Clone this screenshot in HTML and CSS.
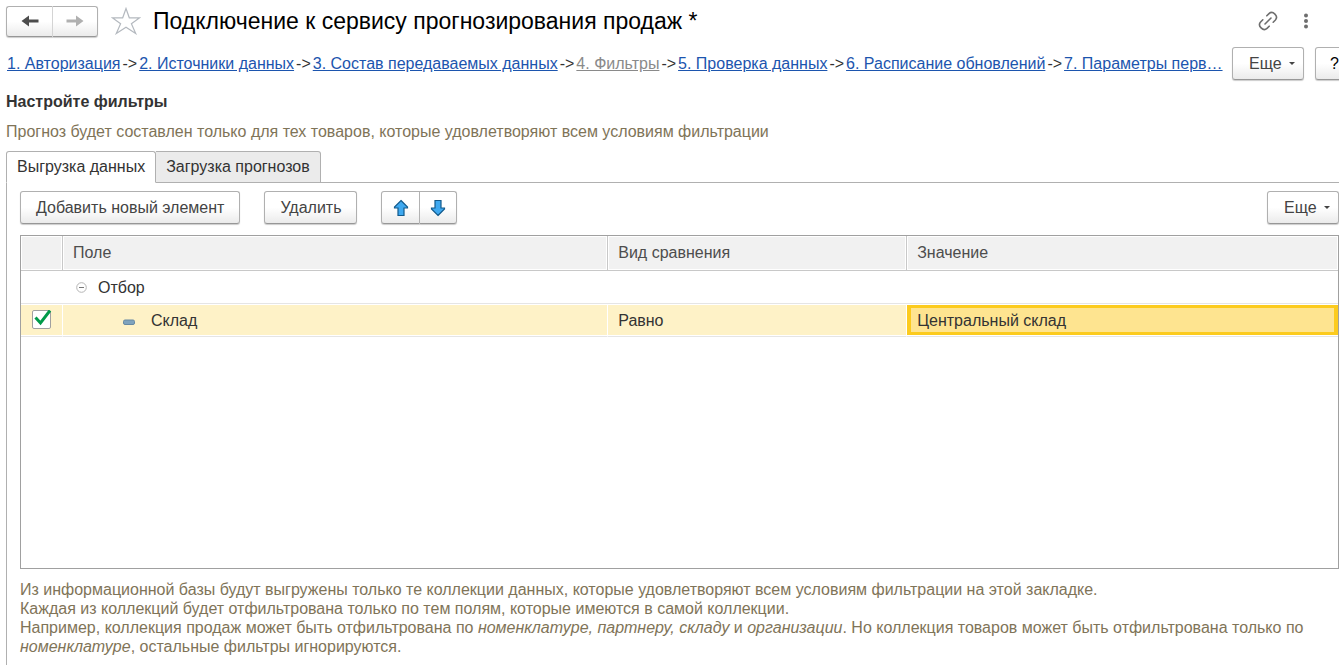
FILE: index.html
```html
<!DOCTYPE html>
<html lang="ru">
<head>
<meta charset="utf-8">
<meta name="viewport" content="width=device-width, initial-scale=1">
<title>Подключение к сервису прогнозирования продаж</title>
<link rel="stylesheet" href="styles.css">
</head>
<body>
<header class="titlebar">
  <div class="btn-group">
    <button class="btn nav-btn" type="button" aria-label="Назад">
      <svg width="18" height="12" viewBox="0 0 18 12"><path d="M17.500 4.500H8V0.500L0.500 6L8 11.500V7.500H17.500Z" fill="#4d4d4d"/></svg>
    </button>
    <button class="btn nav-btn" type="button" aria-label="Вперед">
      <svg width="18" height="12" viewBox="0 0 18 12"><path d="M0.500 4.500H10V0.500L17.500 6L10 11.500V7.500H0.500Z" fill="#b0b0b0"/></svg>
    </button>
  </div>
  <button class="icon-btn star" type="button" aria-label="В избранное">
    <svg width="30" height="28" viewBox="0 0 30 28"><path d="M15 1.500L18.300 10.800H28.700L20.400 16.700L24.700 26.500L15 20.300L5.300 26.500L9.600 16.700L1.300 10.800H11.700Z" fill="#fff" stroke="#b4b9bf" stroke-width="1.200"/></svg>
  </button>
  <h1 class="title">Подключение к сервису прогнозирования продаж *</h1>
  <button class="icon-btn" type="button" aria-label="Ссылка">
    <svg width="20" height="20" viewBox="0 0 20 20" fill="none" stroke="#6e6e6e" stroke-width="1.600" stroke-linecap="round"><path d="M7 13L13 7M8.800 4.800L11 2.600C14.800 -0.800 20.800 5.200 17.400 9L15.200 11.200M11.200 15.200L9 17.400C5.200 20.800 -0.800 14.800 2.600 11L4.800 8.800"/></svg>
  </button>
  <button class="icon-btn dots" type="button" aria-label="Меню">
    <svg width="6" height="16" viewBox="0 0 6 16" fill="#6e6e6e"><circle cx="3" cy="2.500" r="2"/><circle cx="3" cy="8" r="2"/><circle cx="3" cy="13.500" r="2"/></svg>
  </button>
</header>

<div class="steps-row">
  <nav class="steps">
    <a href="#s1">1. Авторизация</a><span>-&gt;</span>
    <a href="#s2">2. Источники данных</a><span>-&gt;</span>
    <a href="#s3">3. Состав передаваемых данных</a><span>-&gt;</span>
    <a class="current" href="#s4">4. Фильтры</a><span>-&gt;</span>
    <a href="#s5">5. Проверка данных</a><span>-&gt;</span>
    <a href="#s6">6. Расписание обновлений</a><span>-&gt;</span>
    <a href="#s7">7. Параметры перв…</a>
  </nav>
  <button class="btn more" type="button">Еще<span class="caret"></span></button>
  <button class="btn help" type="button">?</button>
</div>

<main class="content">
  <h2 class="heading">Настройте фильтры</h2>
  <p class="hint">Прогноз будет составлен только для тех товаров, которые удовлетворяют всем условиям фильтрации</p>

  <div class="tabs" role="tablist">
    <button class="tab active" type="button" role="tab" aria-selected="true">Выгрузка данных</button>
    <button class="tab" type="button" role="tab" aria-selected="false">Загрузка прогнозов</button>
    <div class="tab-rest"></div>
  </div>

  <section class="panel">
    <div class="toolbar">
      <button class="btn text-btn" type="button">Добавить новый элемент</button>
      <button class="btn text-btn" type="button">Удалить</button>
      <div class="btn-group">
        <button class="btn move-btn" type="button" aria-label="Вверх">
          <svg width="16" height="18" viewBox="0 0 16 18"><path d="M8 1.500L14.500 8V9H11V16.500H5V9H1.500V8Z" fill="#3fa9f0" stroke="#125a8c" stroke-width="1.200"/></svg>
        </button>
        <button class="btn move-btn" type="button" aria-label="Вниз">
          <svg width="16" height="18" viewBox="0 0 16 18"><path d="M8 16.500L14.500 10V9H11V1.500H5V9H1.500V10Z" fill="#3fa9f0" stroke="#125a8c" stroke-width="1.200"/></svg>
        </button>
      </div>
      <button class="btn more push" type="button">Еще<span class="caret"></span></button>
    </div>

    <div class="grid-box">
      <table class="grid">
        <colgroup><col class="c-check"><col class="c-field"><col class="c-kind"><col></colgroup>
        <thead>
          <tr><th></th><th>Поле</th><th>Вид сравнения</th><th>Значение</th></tr>
        </thead>
        <tbody>
          <tr>
            <td></td>
            <td><div class="node root"><svg width="11" height="11" viewBox="0 0 11 11" fill="none"><circle cx="5.500" cy="5.500" r="4.800" stroke="#b5b5b5"/><path d="M3 5.500H8" stroke="#777"/></svg>Отбор</div></td>
            <td></td>
            <td></td>
          </tr>
          <tr class="selected">
            <td class="check-cell"><label class="check"><input type="checkbox" aria-label="Использовать" checked><svg width="20" height="20" viewBox="0 0 20 20"><path d="M3.500 7.500L8.500 13L18 0.500" fill="none" stroke="#009a49" stroke-width="3"/></svg></label></td>
            <td><div class="node leaf"><svg width="12" height="10" viewBox="0 0 12 10"><rect x="0.500" y="5" width="11" height="4.500" rx="1.500" fill="#7fa3bd" stroke="#6689a3"/></svg>Склад</div></td>
            <td>Равно</td>
            <td class="focus">Центральный склад</td>
          </tr>
        </tbody>
      </table>
    </div>

    <p class="note">Из информационной базы будут выгружены только те коллекции данных, которые удовлетворяют всем условиям фильтрации на этой закладке.<br>Каждая из коллекций будет отфильтрована только по тем полям, которые имеются в самой коллекции.<br>Например, коллекция продаж может быть отфильтрована по <em>номенклатуре, партнеру, складу</em> и <em>организации</em>. Но коллекция товаров может быть отфильтрована только по <em>номенклатуре</em>, остальные фильтры игнорируются.</p>
  </section>
</main>
</body>
</html>
```

FILE: styles.css
```css
* { box-sizing: border-box; }

html { height: 100%; }

body {
  margin: 0;
  min-height: 100%;
  display: flex;
  flex-direction: column;
  overflow-x: hidden;
  background: #fff;
  color: #333;
  font: 16px/19px "Liberation Sans", Arial, sans-serif;
}

button { font: inherit; color: inherit; cursor: pointer; }
svg { display: block; flex: none; }

.titlebar {
  display: flex;
  align-items: center;
  height: 42px;
  padding: 0 30px 0 6px;
}

.title {
  flex: 1;
  margin: 0 0 0 12px;
  color: #000;
  font-size: 23px;
  line-height: 28px;
  font-weight: 400;
  white-space: nowrap;
}

.icon-btn { padding: 0; border: 0; background: none; }
.star { margin-left: 13px; }
.dots { margin-left: 25px; }

.btn {
  display: flex;
  align-items: center;
  justify-content: center;
  flex: none;
  height: 33px;
  padding: 0 15px;
  border: 1px solid #b0b0b0;
  border-bottom-color: #979797;
  border-radius: 3px;
  background: linear-gradient(#fff 50%, #ebebeb);
  box-shadow: 0 1px 1px #ccc;
  color: #444;
  white-space: nowrap;
}

.btn-group { display: flex; }
.btn-group .btn:first-child { border-radius: 3px 0 0 3px; }
.btn-group .btn:last-child { border-left: 0; border-radius: 0 3px 3px 0; }
.nav-btn { width: 46px; height: 31px; padding: 0; }
.nav-btn:first-child { width: 47px; border-right-color: #d5d5d5; }
.nav-btn:last-child { width: 45px; }
.move-btn { width: 37px; padding: 0; }
.move-btn:first-child { width: 39px; }

.more { width: 72px; padding: 0 8px 0 16px; justify-content: space-between; }
.caret {
  border: 3px solid transparent;
  border-top-color: #444;
  border-bottom: 0;
}
.help { width: 39px; padding: 0; color: #000; }

.steps-row {
  display: flex;
  align-items: center;
  margin: 5px -15px 0 0;
  padding-left: 7px;
}
.steps {
  flex: 1;
  display: flex;
  gap: 2px;
  white-space: nowrap;
}
.steps a { color: #1c55ae; }
.steps .current { color: #8a8a8a; }
.steps-row .more { margin: 0 11px 0 6px; }

.content {
  flex: 1;
  display: flex;
  flex-direction: column;
  padding-left: 6px;
}
.heading { margin: 12px 0 11px; font-size: 16px; line-height: 19px; }
.hint { margin: 0 0 10px; color: #7f7458; }

.tabs { display: flex; }
.tab {
  height: 32px;
  padding: 0 10px 1px;
  border: 1px solid #b0b0b0;
  border-left: 0;
  border-radius: 0 3px 0 0;
  background: #ebebeb;
}
.tab.active {
  border-left: 1px solid #b0b0b0;
  border-bottom-color: #fff;
  border-radius: 3px 3px 0 0;
  background: #fff;
}
.tab-rest { flex: 1; border-bottom: 1px solid #b0b0b0; }

.panel {
  flex: 1;
  padding: 8px 0 8px 13px;
  border-left: 1px solid #b0b0b0;
}

.toolbar { display: flex; gap: 24px; }
.push { margin-left: auto; }

.grid-box {
  height: 334px;
  margin-top: 11px;
  border: 1px solid #a0a0a0;
}
.grid {
  width: 100%;
  table-layout: fixed;
  border-collapse: separate;
  border-spacing: 0;
}
.c-check { width: 42px; }
.c-field { width: 41.4%; }
.c-kind { width: 22.7%; }

.grid th {
  height: 35px;
  padding: 0 10px 2px;
  border-right: 1px solid #c8c8c8;
  border-bottom: 1px solid #c8c8c8;
  background: #f1f1f1;
  box-shadow: inset 0 0 0 1px #fff;
  color: #4d4d4d;
  font-weight: 400;
  text-align: left;
}
.grid td {
  height: 33px;
  padding: 0 10px;
  border-bottom: 1px solid #e5e5e5;
}
.grid th:last-child { border-right: 0; }
.grid .selected td {
  border-right: 1px solid #fff;
  background: #fef2c7;
  box-shadow: inset 0 1px #fff, inset 0 -1px #fff;
}
.grid .selected .focus {
  border-right: 0;
  background: #fee490;
  box-shadow: inset 0 1px #fff, inset 0 -1px #fff, inset 0 0 0 4px #fccb1e;
}

.node { display: flex; align-items: center; }
.root { gap: 11px; padding-left: 3px; }
.leaf { gap: 16px; padding-left: 50px; }

.grid .check-cell { padding: 0 0 0 11px; }
.check { display: grid; width: 20px; height: 20px; }
.check input {
  grid-area: 1 / 1;
  appearance: none;
  width: 19px;
  height: 19px;
  margin: 0;
  border: 1px solid #a0a0a0;
  border-radius: 2px;
  background: #fff;
}
.check svg { grid-area: 1 / 1; z-index: 1; visibility: hidden; pointer-events: none; }
.check input:checked + svg { visibility: visible; }

.note { margin: 11px 20px 0 0; color: #7f7458; }
```
